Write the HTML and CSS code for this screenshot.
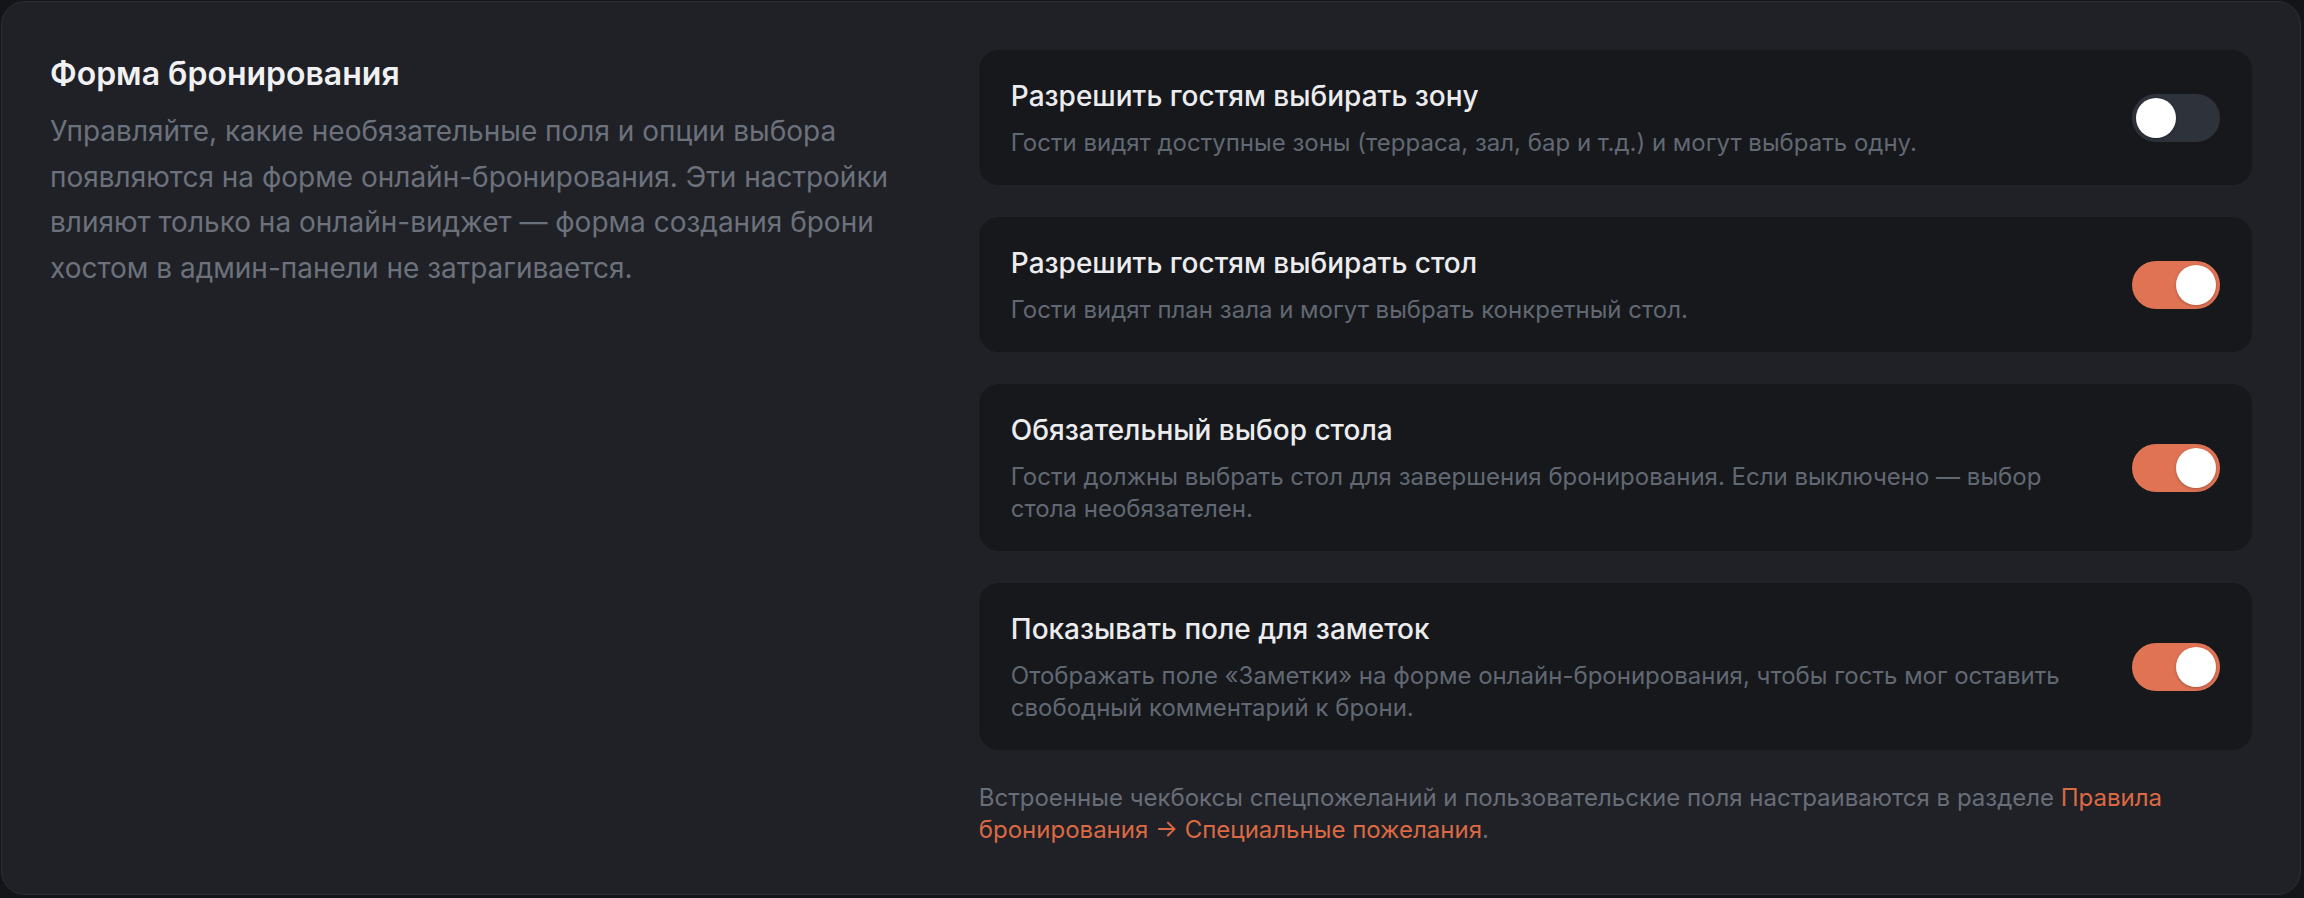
FILE: index.html
```html
<!DOCTYPE html>
<html lang="ru">
<head>
<meta charset="utf-8">
<title>Форма бронирования</title>
<link rel="stylesheet" href="styles.css">
</head>
<body>
<section class="panel">
  <div class="layout">
    <div class="intro">
      <h2 class="intro-title">Форма бронирования</h2>
      <p class="intro-text">Управляйте, какие необязательные поля и опции выбора появляются на форме онлайн-бронирования. Эти настройки влияют только на онлайн-виджет — форма создания брони хостом в админ-панели не затрагивается.</p>
    </div>
    <div class="settings">
      <div class="card">
        <div class="card-text">
          <div class="card-title">Разрешить гостям выбирать зону</div>
          <div class="card-desc">Гости видят доступные зоны (терраса, зал, бар и т.д.) и могут выбрать одну.</div>
        </div>
        <span class="toggle"><span class="knob"></span></span>
      </div>
      <div class="card">
        <div class="card-text">
          <div class="card-title">Разрешить гостям выбирать стол</div>
          <div class="card-desc">Гости видят план зала и могут выбрать конкретный стол.</div>
        </div>
        <span class="toggle on"><span class="knob"></span></span>
      </div>
      <div class="card">
        <div class="card-text">
          <div class="card-title">Обязательный выбор стола</div>
          <div class="card-desc">Гости должны выбрать стол для завершения бронирования. Если выключено — выбор стола необязателен.</div>
        </div>
        <span class="toggle on"><span class="knob"></span></span>
      </div>
      <div class="card">
        <div class="card-text">
          <div class="card-title">Показывать поле для заметок</div>
          <div class="card-desc">Отображать поле «Заметки» на форме онлайн-бронирования, чтобы гость мог оставить свободный комментарий к брони.</div>
        </div>
        <span class="toggle on"><span class="knob"></span></span>
      </div>
      <p class="note">Встроенные чекбоксы спецпожеланий и пользовательские поля настраиваются в разделе <a class="note-link" href="#">Правила бронирования → Специальные пожелания</a>.</p>
    </div>
  </div>
</section>
</body>
</html>
```

FILE: styles.css
```css
* { box-sizing: border-box; }

html, body {
  margin: 0;
  background: #141518;
}

body {
  padding: 1px 3px 2px 1px;
  font-family: Inter, "Noto Sans", sans-serif;
  -webkit-font-smoothing: antialiased;
}

.panel {
  background: #1f2126;
  border: 1px solid #2b2e34;
  border-radius: 24px;
  padding: 48px;
}

.layout {
  display: grid;
  grid-template-columns: 2fr 3fr;
  gap: 80px;
}

.intro-title {
  margin: 0;
  font-size: 32px;
  line-height: 48px;
  font-weight: 600;
  color: #f1f1f3;
}

.intro-text {
  margin: 11px 0 0;
  font-size: 28px;
  line-height: 45.5px;
  color: #6c717c;
}

.settings {
  display: flex;
  flex-direction: column;
  gap: 32px;
}

.card {
  display: flex;
  align-items: center;
  gap: 32px;
  padding: 26px 32px;
  background: #16181b;
  border-radius: 20px;
}

.card-text {
  flex: 1;
  min-width: 0;
}

.card-title {
  font-size: 28px;
  line-height: 40px;
  font-weight: 500;
  color: #ececef;
}

.card-desc {
  margin-top: 11px;
  font-size: 24px;
  line-height: 32px;
  color: #626873;
}

.toggle {
  flex-shrink: 0;
  display: flex;
  width: 88px;
  height: 48px;
  padding: 4px;
  border-radius: 24px;
  background: #2e333b;
}

.toggle.on {
  background: #df7354;
  justify-content: flex-end;
}

.knob {
  width: 40px;
  height: 40px;
  border-radius: 50%;
  background: #ffffff;
  box-shadow: 0 1px 3px rgba(0, 0, 0, 0.25);
}

.note {
  margin: 0;
  font-size: 24px;
  line-height: 32px;
  color: #686d78;
}

.note-link {
  color: #dc6943;
  text-decoration: none;
}
```
